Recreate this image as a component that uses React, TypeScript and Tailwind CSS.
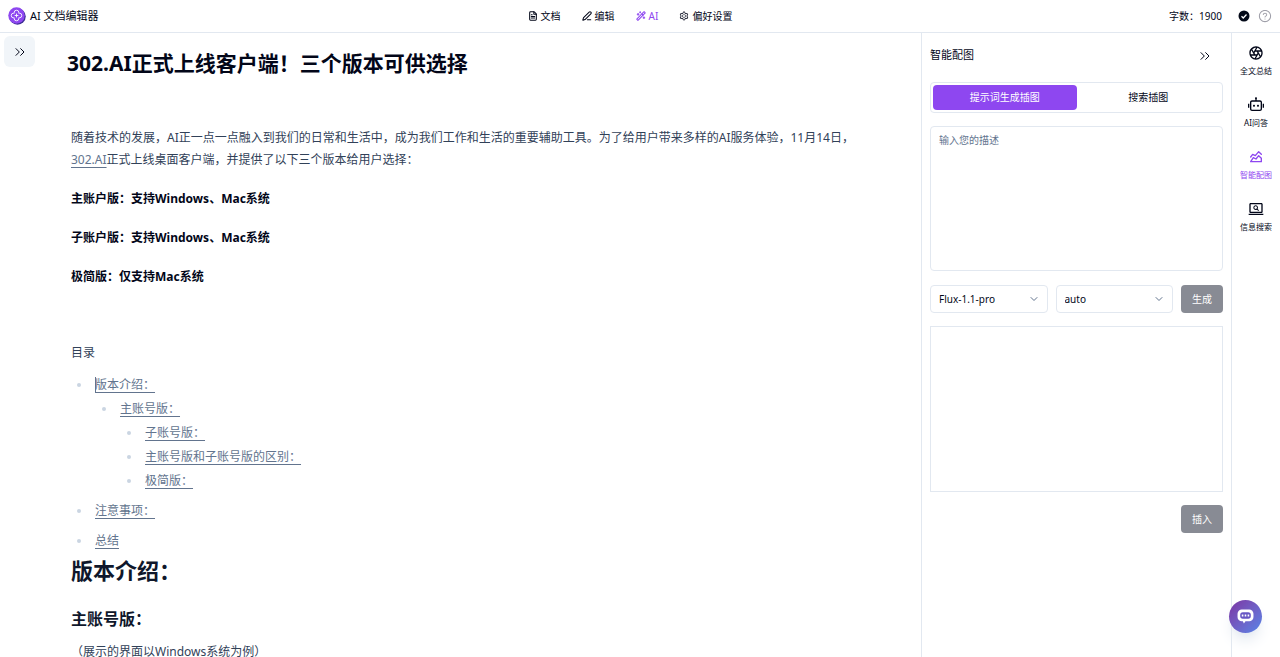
import React, { useState } from 'react';
import { ChevronDown, ChevronsRight, FileText, PenLine, WandSparkles } from 'lucide-react';
import { AiOutlineQuestionCircle, AiOutlineSetting } from 'react-icons/ai';
import { MdOutlineScreenSearchDesktop } from 'react-icons/md';
import { RiCameraLensLine, RiRobot2Line } from 'react-icons/ri';
import { TbChartAreaLine } from 'react-icons/tb';
import clsx from 'clsx';

const Logo: React.FC = () => (
  <svg viewBox="0 0 36 36" className="w-[18px] h-[18px]" aria-hidden="true">
    <circle cx="19" cy="19" r="16.5" fill="#3f2f96" />
    <circle cx="17" cy="17" r="16.5" fill="#8e47f0" />
    <path
      d="M12.5 12.5v-2a4.500 4 0 0 1 9 0v2h2a4 4.500 0 0 1 0 9h-2v2a4.500 4 0 0 1-9 0v-2h-2a4 4.500 0 0 1 0-9z"
      fill="none"
      stroke="#fff"
      strokeWidth="1.8"
      strokeLinejoin="round"
    />
    <path d="M17 14v6M14 17h6" stroke="#fff" strokeWidth="1.8" strokeLinecap="round" />
  </svg>
);

const menus = [
  { label: '文档', icon: <FileText className="w-2.5 h-2.5" strokeWidth={2.5} /> },
  { label: '编辑', icon: <PenLine className="w-2.5 h-2.5" strokeWidth={2.5} /> },
  { label: 'AI', icon: <WandSparkles className="w-2.5 h-2.5" strokeWidth={2.5} />, active: true },
  { label: '偏好设置', icon: <AiOutlineSetting className="w-2.5 h-2.5" /> },
];

const Header: React.FC = () => (
  <header className="flex h-[33px] shrink-0 items-center border-b border-slate-200 px-2">
    <div className="flex flex-1 items-center gap-1">
      <Logo />
      <span className="text-[11px]">AI 文档编辑器</span>
    </div>
    <nav className="mr-5 flex items-center gap-[21px]">
      {menus.map((menu) => (
        <button
          key={menu.label}
          type="button"
          className={clsx('flex items-center gap-[3px]', menu.active && 'text-[#8e47f0]')}
        >
          {menu.icon}
          {menu.label}
        </button>
      ))}
    </nav>
    <div className="flex flex-1 items-center justify-end">
      <span className="mr-4">字数：1900</span>
      <svg viewBox="0 0 24 24" className="mr-2 h-3 w-3" role="img" aria-label="已保存">
        <circle cx="12" cy="12" r="11" fill="#020817" />
        <path d="M7 12.5l3.5 3.5 6.5-7" fill="none" stroke="#fff" strokeWidth="2.5" />
      </svg>
      <button type="button" aria-label="帮助" className="text-zinc-400">
        <AiOutlineQuestionCircle className="h-3.5 w-3.5" />
      </button>
    </div>
  </header>
);

type TocItem = { title: string; children?: TocItem[] };

const toc: TocItem[] = [
  {
    title: '版本介绍：',
    children: [
      {
        title: '主账号版：',
        children: [{ title: '子账号版：' }, { title: '主账号版和子账号版的区别：' }, { title: '极简版：' }],
      },
    ],
  },
  { title: '注意事项：' },
  { title: '总结' },
];

const TocList: React.FC<{ items: TocItem[]; level?: number }> = ({ items, level = 0 }) => (
  <ul className={level > 0 ? 'pl-[25px]' : 'flex flex-col gap-1.5 pl-1.5'}>
    {items.map((item, i) => (
      <li key={item.title}>
        <div className="flex h-6 items-center">
          <span className="mr-3.5 h-1 w-1 rounded-full bg-slate-300" />
          {level === 0 && i === 0 && <span className="-mr-px h-4 w-px bg-slate-500" />}
          <a href={`#${item.title}`} className="text-slate-500 underline underline-offset-3">
            {item.title}
          </a>
        </div>
        {item.children && <TocList items={item.children} level={level + 1} />}
      </li>
    ))}
  </ul>
);

const Editor: React.FC = () => (
  <main className="flex min-w-0 flex-1 overflow-hidden">
    <div className="shrink-0 px-1 pt-[3px]">
      <button
        type="button"
        aria-label="展开目录"
        className="flex h-[31px] w-[31px] items-center justify-center rounded-md bg-slate-100"
      >
        <ChevronsRight className="h-4 w-4" strokeWidth={1.5} />
      </button>
    </div>
    <article className="min-w-0 flex-1 pl-8 pr-10 pt-[15px] text-[12px] leading-[22px] text-slate-700">
      <h1 className="-ml-1 text-[21px] font-bold leading-[30px] text-slate-950">
        302.AI正式上线客户端！三个版本可供选择
      </h1>
      <p className="mt-[49px]">
        随着技术的发展，AI正一点一点融入到我们的日常和生活中，成为我们工作和生活的重要辅助工具。为了给用户带来多样的AI服务体验，11月14日，
        <a href="#302" className="text-slate-500 underline underline-offset-3">302.AI</a>
        正式上线桌面客户端，并提供了以下三个版本给用户选择：
      </p>
      <p className="mt-[17px] font-bold text-slate-950">主账户版：支持Windows、Mac系统</p>
      <p className="mt-[17px] font-bold text-slate-950">子账户版：支持Windows、Mac系统</p>
      <p className="mt-[17px] font-bold text-slate-950">极简版：仅支持Mac系统</p>
      <p className="mt-[54px] mb-[9px]">目录</p>
      <TocList items={toc} />
      <h2 className="mt-px text-[22px] font-bold leading-8 text-slate-900">版本介绍：</h2>
      <h3 className="mt-[21px] text-[16px] font-bold leading-6 text-slate-900">主账号版：</h3>
      <p className="mt-2.5">（展示的界面以Windows系统为例）</p>
    </article>
  </main>
);

const Select: React.FC<{ label: string; value: string }> = ({ label, value }) => (
  <div className="relative flex-1">
    <select
      aria-label={label}
      defaultValue={value}
      className="h-7 w-full appearance-none rounded border border-slate-200 bg-white px-2"
    >
      <option>{value}</option>
    </select>
    <ChevronDown
      className="pointer-events-none absolute right-2 top-2 h-3 w-3 text-slate-500"
      strokeWidth={2}
    />
  </div>
);

const tabs = ['提示词生成插图', '搜索插图'];

const ImagePanel: React.FC = () => {
  const [tab, setTab] = useState(tabs[0]);

  return (
    <section className="w-[310px] shrink-0 border-l border-slate-200 pl-2 pr-2">
      <div className="flex h-[45px] items-center justify-between pr-2.5">
        <h2 className="text-[11px]">智能配图</h2>
        <button type="button" aria-label="收起">
          <ChevronsRight className="h-4 w-4" strokeWidth={1.5} />
        </button>
      </div>
      <div className="mt-1 flex rounded border border-slate-200 p-0.5">
        {tabs.map((t) => (
          <button
            key={t}
            type="button"
            onClick={() => setTab(t)}
            className={clsx('h-[25px] flex-1 rounded', tab === t && 'bg-[#8e47f0] text-white')}
          >
            {t}
          </button>
        ))}
      </div>
      <textarea
        aria-label="描述"
        placeholder="输入您的描述"
        className="mt-[13px] block h-[145px] w-full resize-none rounded border border-slate-200 px-2 py-1.5 placeholder:text-slate-500"
      />
      <div className="mt-3.5 flex gap-2">
        <Select label="模型" value="Flux-1.1-pro" />
        <Select label="尺寸" value="auto" />
        <button type="button" className="h-7 w-[42px] rounded bg-[#888b94] text-white">
          生成
        </button>
      </div>
      <div className="mt-[13px] h-[166px] border border-slate-200" />
      <div className="mt-[13px] flex justify-end">
        <button type="button" className="h-7 w-[42px] rounded bg-[#888b94] text-white">
          插入
        </button>
      </div>
    </section>
  );
};

const tools = [
  { label: '全文总结', icon: <RiCameraLensLine className="h-4 w-4" /> },
  { label: 'AI问答', icon: <RiRobot2Line className="h-4 w-4" /> },
  { label: '智能配图', icon: <TbChartAreaLine className="h-4 w-4" />, active: true },
  { label: '信息搜索', icon: <MdOutlineScreenSearchDesktop className="h-4 w-4" /> },
];

const ToolRail: React.FC = () => (
  <aside className="flex w-[49px] shrink-0 flex-col gap-5 border-l border-slate-200 pt-3">
    {tools.map((tool) => (
      <button
        key={tool.label}
        type="button"
        className={clsx(
          'flex flex-col items-center gap-1 text-[8px] leading-3',
          tool.active && 'text-[#8e47f0]'
        )}
      >
        {tool.icon}
        {tool.label}
      </button>
    ))}
  </aside>
);

const ChatButton: React.FC = () => (
  <button
    type="button"
    aria-label="在线客服"
    className="fixed bottom-6 right-[18px] flex h-[33px] w-[33px] items-center justify-center rounded-full bg-linear-to-br from-[#7a33a3] to-[#5285e8] shadow-lg shadow-slate-200"
  >
    <svg viewBox="0 0 32 28" className="h-[15px] w-[17px]" aria-hidden="true">
      <path
        d="M9 1h14a8 8 0 0 1 8 8v6a8 8 0 0 1-8 8h-7l-3 4-2-4h-2a8 8 0 0 1-8-8v-6a8 8 0 0 1 8-8z"
        fill="#fff"
      />
      <rect x="6" y="6" width="20" height="12" rx="5" fill="#6757c4" />
      <path d="M9 12h3M14.5 12h3M20 12h3" stroke="#fff" strokeWidth="4" />
    </svg>
  </button>
);

export default function App() {
  return (
    <div className="flex h-screen flex-col bg-white font-['Noto_Sans','Noto_Sans_CJK_SC',sans-serif] text-[10px] text-slate-950">
      <Header />
      <div className="flex min-h-0 flex-1">
        <Editor />
        <ImagePanel />
        <ToolRail />
      </div>
      <ChatButton />
    </div>
  );
}
